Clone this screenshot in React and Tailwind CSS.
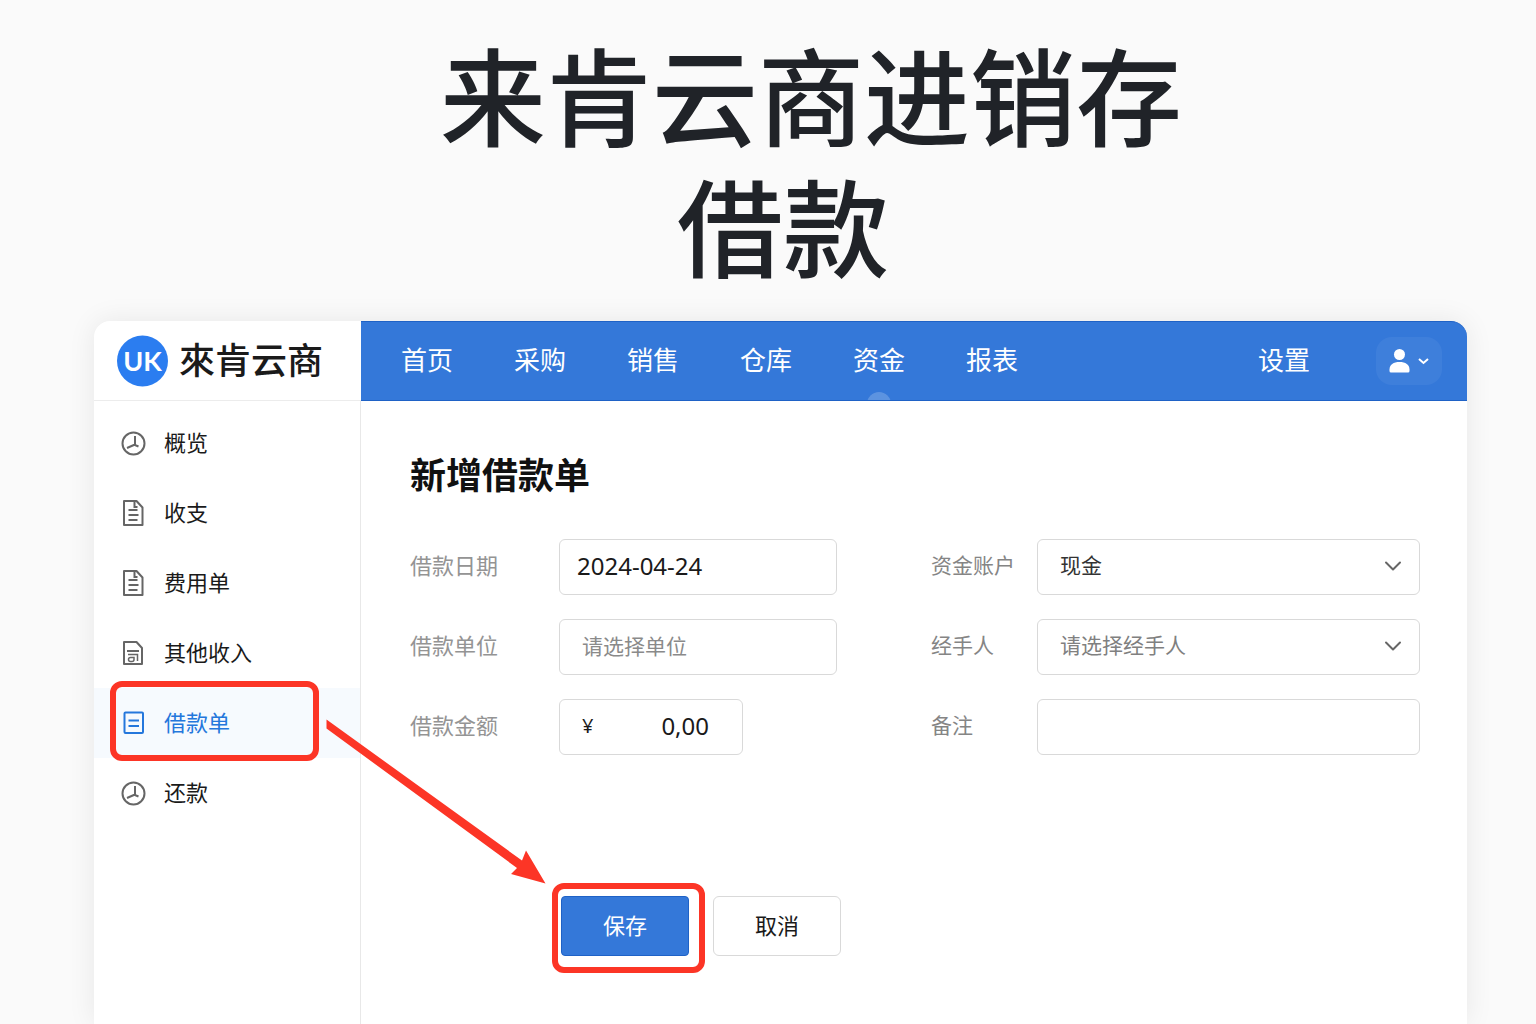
import { useState } from "react";

const FONT = "font-['Noto_Sans','Noto_Sans_CJK_SC',sans-serif]";

const NAV = ["首页", "采购", "销售", "仓库", "资金", "报表"];

const MENU = [
  { nome: "概览", icon: ClockIcon },
  { nome: "收支", icon: DocIcon },
  { nome: "费用单", icon: DocIcon },
  { nome: "其他收入", icon: IncomeIcon },
  { nome: "借款单", icon: LoanIcon },
  { nome: "还款", icon: ClockIcon },
];

/* ── Icons ────────────────────────────────────────────────── */
function Icon({ children }) {
  return (
    <svg width="26" height="28" viewBox="0 0 26 28" fill="none" stroke="currentColor" strokeWidth="2" className="shrink-0" aria-hidden="true">
      {children}
    </svg>
  );
}

function ClockIcon() {
  return (
    <Icon>
      <circle cx="12.5" cy="14.5" r="11" />
      <path d="M14 7v9l3.5 1.5M14 15.5l-8 3.500" />
    </Icon>
  );
}

function DocIcon() {
  return (
    <Icon>
      <path d="M3 2h12.5l6 6.5V26H3z" strokeLinejoin="round" />
      <path d="M13.5 3v5h3M7.5 11h9M7.5 16h10M7.500 21h9" />
    </Icon>
  );
}

function IncomeIcon() {
  return (
    <Icon>
      <path d="M3 3h12.5l5.5 6v16H3z" strokeLinejoin="round" />
      <path d="M6 12h12" />
      <path d="M7 15.500h9.500V22M13 18.500H9.500a2 2 0 0 0 0 4h1.500a2 2 0 0 0 2-2z" strokeWidth="1.500" />
    </Icon>
  );
}

function LoanIcon() {
  return (
    <Icon>
      <rect x="3.500" y="3.500" width="18.500" height="20.500" rx="1" />
      <path d="M7.500 11.500h10.500M7.500 17h10.500" />
    </Icon>
  );
}

function Chevron({ className }) {
  return (
    <svg viewBox="0 0 18 10" fill="none" stroke="currentColor" strokeWidth="2" strokeLinecap="round" strokeLinejoin="round" className={className} aria-hidden="true">
      <path d="M2 1.500l7 7 7-7" />
    </svg>
  );
}

function Logo() {
  return (
    <svg width="52" height="52" viewBox="0 0 52 52" className="shrink-0 font-['Lato',sans-serif] font-bold" fill="#fff" fontSize="27">
      <circle cx="25.500" cy="26" r="25.500" fill="#2b7df0" />
      <text x="25.500" y="36" textAnchor="middle">UK</text>
    </svg>
  );
}

/* ── Form ─────────────────────────────────────────────────── */
const BOX = "h-14 w-full min-w-0 rounded-md border border-[#d9d9d9] bg-white outline-none focus:border-[#3478d9]";

function Field({ id, label, right, children }) {
  return (
    <div className="flex items-center">
      <label
        htmlFor={id}
        className={right ? "w-[106px] shrink-0 pb-[2px] text-[21px] text-[#858585]" : "w-[149px] shrink-0 pb-1 text-[22px] text-[#949494]"}
      >
        {label}
      </label>
      {children}
    </div>
  );
}

function SelectBox({ id, options, className }) {
  return (
    <div className="relative min-w-0 flex-1">
      <select id={id} className={`${BOX} appearance-none px-[22px] pb-[2px] text-[21px] ${className}`}>
        {options.map((o) => (
          <option key={o}>{o}</option>
        ))}
      </select>
      <Chevron className="pointer-events-none absolute top-[22px] right-[18px] h-[10px] w-[18px] text-[#666]" />
    </div>
  );
}

export default function App() {
  const [date, setDate] = useState("2024-04-24");
  const [amount, setAmount] = useState("0,00");

  return (
    <div className={`flex min-h-screen flex-col overflow-hidden bg-[#fafafa] pt-8 text-[#1a1a1a] ${FONT}`}>
      <h1 className="text-center text-[106px] leading-[131px] font-medium text-[#202328]">
        <span className="block pl-[86px]">来肯云商进销存</span>
        <span className="block pl-[30px]">借款</span>
      </h1>

      <div className="relative mt-[27px] mr-[69px] ml-[94px] flex flex-1 flex-col rounded-t-2xl bg-white shadow-[0_0_28px_rgba(0,0,0,0.08)]">
        {/* Top bar */}
        <header className="flex h-20">
          <div className="flex w-[267px] shrink-0 items-center gap-[10px] border-b border-[#ececec] pl-[23px]">
            <Logo />
            <span className="text-[36px] leading-none font-medium whitespace-nowrap">來肯云商</span>
          </div>

          <div className="flex flex-1 items-center justify-between overflow-hidden rounded-tr-2xl border-y border-[#1f62c6] bg-[#3478d9] pr-[25px] pl-10 text-[26px] text-white">
            <nav className="flex h-full items-center gap-[61px]">
              {NAV.map((n) => (
                <a key={n} href="#" className="relative flex h-full items-center pb-[2px] whitespace-nowrap">
                  {n}
                  {n === "资金" && <span className="absolute -bottom-4 left-1/2 size-6 -translate-x-1/2 rounded-full bg-white/20" />}
                </a>
              ))}
            </nav>

            <div className="flex items-center gap-[66px]">
              <a href="#" className="pb-[2px] whitespace-nowrap">设置</a>
              <button type="button" aria-label="用户" className="flex h-12 w-[66px] items-center justify-center gap-2 rounded-2xl bg-white/5">
                <svg width="21" height="25" viewBox="0 0 21 25" fill="currentColor" aria-hidden="true">
                  <circle cx="10.500" cy="5.500" r="5.500" />
                  <path d="M.5 22v-1.500C.5 15.500 4.500 13 10.500 13S20.500 15.500 20.500 20.500v1.500q0 1.500-1.500 1.500H2Q.5 23.500 .5 22z" />
                </svg>
                <svg width="11" height="7" viewBox="0 0 11 7" fill="none" stroke="currentColor" strokeWidth="2" aria-hidden="true">
                  <path d="M1 1l4.500 4L10 1" />
                </svg>
              </button>
            </div>
          </div>
        </header>

        <div className="flex flex-1">
          {/* Sidebar */}
          <aside className="w-[267px] shrink-0 border-r border-[#e8e8e8] pt-[7px] text-[22px]">
            {MENU.map(({ nome, icon: ItemIcon }) => {
              const active = nome === "借款单";
              return (
                <a
                  key={nome}
                  href="#"
                  className={`relative flex h-[70px] items-center gap-[17px] pl-[27px] ${active ? "bg-[#f6fafe] text-[#2477dc]" : ""}`}
                >
                  <span className={active ? "" : "text-[#666]"}>
                    <ItemIcon />
                  </span>
                  <span className="pb-[2px]">{nome}</span>
                  {active && (
                    <span className="absolute -top-[7px] right-[41px] -bottom-[3px] left-4 rounded-xl border-[6px] border-[#fc3526]" />
                  )}
                </a>
              );
            })}
          </aside>

          {/* Content */}
          <main className="min-w-0 flex-1 pt-12 pr-[47px] pb-16 pl-[49px]">
            <h2 className="mb-9 text-[36px] leading-[54px] font-bold text-[#111]">新增借款单</h2>

            <form onSubmit={(e) => e.preventDefault()}>
              <div className="grid grid-cols-[427fr_489fr] gap-x-[94px] gap-y-6">
                <Field id="date" label="借款日期">
                  <input id="date" value={date} onChange={(e) => setDate(e.target.value)} className={`${BOX} px-[17px] pb-1 text-2xl`} />
                </Field>
                <Field id="account" label="资金账户" right>
                  <SelectBox id="account" options={["现金"]} className="text-[#333]" />
                </Field>

                <Field id="unit" label="借款单位">
                  <input id="unit" placeholder="请选择单位" className={`${BOX} px-[22px] pb-[2px] text-[21px] placeholder:text-[#8a8a8a]`} />
                </Field>
                <Field id="handler" label="经手人" right>
                  <SelectBox id="handler" options={["请选择经手人"]} className="text-[#808080]" />
                </Field>

                <Field id="amount" label="借款金额">
                  <div className={`${BOX} flex max-w-[184px] items-center pr-[33px] pb-[2px] pl-[22px]`}>
                    <span className="text-xl">¥</span>
                    <input
                      id="amount"
                      value={amount}
                      onChange={(e) => setAmount(e.target.value)}
                      className="w-full min-w-0 text-right text-2xl outline-none"
                    />
                  </div>
                </Field>
                <Field id="note" label="备注" right>
                  <input id="note" className={`${BOX} px-[22px] text-[21px]`} />
                </Field>
              </div>

              <div className="mt-[141px] flex gap-6 pl-[151px] text-[22px]">
                <div className="relative">
                  <button type="submit" className="h-[60px] w-32 rounded-sm border border-[#1f62c6] bg-[#3478d9] pb-[2px] text-white">
                    保存
                  </button>
                  <span className="pointer-events-none absolute -top-[13px] -right-4 -bottom-[17px] -left-[9px] rounded-xl border-[6px] border-[#fc3526]" />
                </div>
                <button type="button" className="h-[60px] w-32 rounded-md border border-[#d9d9d9] bg-white pb-[2px]">
                  取消
                </button>
              </div>
            </form>
          </main>
        </div>

        {/* Arrow from the menu item to the save button */}
        <svg width="220" height="166" viewBox="0 0 220 166" fill="#fc3526" className="pointer-events-none absolute top-[398px] left-[232px]" aria-hidden="true">
          <path d="M.5 .5L196 141.500L200 131.500L219.500 164.500L185 155L191 149L.5 9.500z" />
        </svg>
      </div>
    </div>
  );
}
